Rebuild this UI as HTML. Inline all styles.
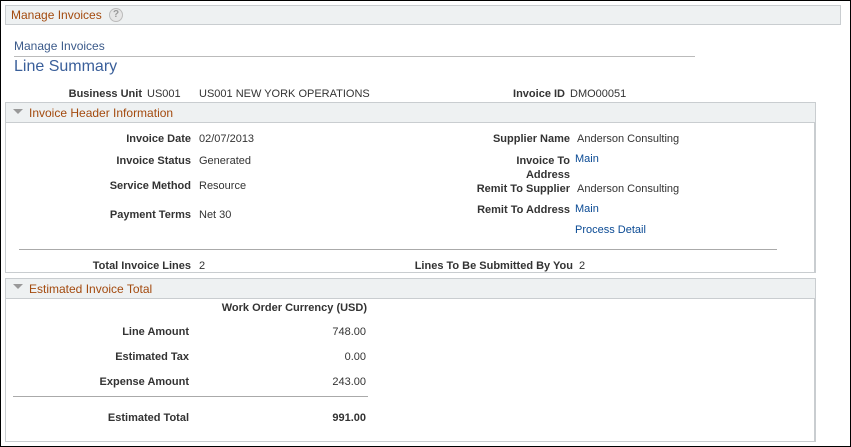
<!DOCTYPE html>
<html><head><style>
*{margin:0;padding:0;box-sizing:border-box}
body{width:851px;height:447px;position:relative;background:#fff;font-family:"Liberation Sans",Arial,sans-serif;font-size:11px;color:#333;overflow:hidden}
#outer{position:absolute;left:0;top:0;width:851px;height:447px;border:1px solid #000}
.a{position:absolute;line-height:14px;white-space:nowrap;margin-top:1px}
.l{font-weight:bold;text-align:right;color:#333}
.lk{color:#0a4a94}
.hdr{position:absolute;background:#eef1f2;border:1px solid #c9cdd0;height:21px}
.box{position:absolute;border:1px solid #c9cdd0;border-right:2px solid #c9cdd0}
.ht{position:absolute;color:#a34a0e;font-size:12px;line-height:14px;margin-top:1px}
.tri{position:absolute;width:0;height:0;border-left:5px solid transparent;border-right:5px solid transparent;border-top:5px solid #999}
.hr{position:absolute;height:1px;background:#aaa}
</style></head><body>
<div id="outer"></div>
<div class="hdr" style="left:5px;top:5px;width:836px;height:20px"></div>
<div class="ht" style="left:11px;top:7px">Manage Invoices</div>
<div style="position:absolute;left:109px;top:8px;width:14px;height:14px;border-radius:50%;border:1px solid #bbb;background:#e6e6e6;color:#999;font-size:10px;font-weight:bold;text-align:center;line-height:12px">?</div>
<div class="a" style="left:14px;top:38px;font-size:12px;color:#3b5a8a">Manage Invoices</div>
<div class="hr" style="left:14px;top:56px;width:681px;background:#bbb"></div>
<div class="a" style="left:14px;top:56px;font-size:16px;line-height:20px;color:#3a5f9a">Line Summary</div>

<div class="a l" style="right:709px;top:86px">Business Unit</div>
<div class="a" style="left:147px;top:86px">US001</div>
<div class="a" style="left:199px;top:86px">US001 NEW YORK OPERATIONS</div>
<div class="a l" style="right:286px;top:86px">Invoice ID</div>
<div class="a" style="left:570px;top:86px">DMO00051</div>

<div class="box" style="left:5px;top:102px;width:811px;height:171px"></div>
<div class="hdr" style="left:5px;top:102px;width:811px"></div>
<div class="tri" style="left:13px;top:109px"></div>
<div class="ht" style="left:29px;top:105px">Invoice Header Information</div>

<div class="a l" style="right:660px;top:131px">Invoice Date</div><div class="a" style="left:199px;top:131px">02/07/2013</div>
<div class="a l" style="right:660px;top:153px">Invoice Status</div><div class="a" style="left:199px;top:153px">Generated</div>
<div class="a l" style="right:660px;top:178px">Service Method</div><div class="a" style="left:199px;top:178px">Resource</div>
<div class="a l" style="right:660px;top:207px">Payment Terms</div><div class="a" style="left:199px;top:207px">Net 30</div>

<div class="a l" style="right:281px;top:131px">Supplier Name</div><div class="a" style="left:577px;top:131px">Anderson Consulting</div>
<div class="a l" style="right:281px;top:153px">Invoice To<br>Address</div><div class="a lk" style="left:575px;top:151px">Main</div>
<div class="a l" style="right:281px;top:181px">Remit To Supplier</div><div class="a" style="left:577px;top:181px">Anderson Consulting</div>
<div class="a l" style="right:281px;top:202px">Remit To Address</div><div class="a lk" style="left:575px;top:201px">Main</div>
<div class="a lk" style="left:575px;top:222px">Process Detail</div>
<div class="hr" style="left:19px;top:249px;width:758px"></div>
<div class="a l" style="right:660px;top:258px">Total Invoice Lines</div><div class="a" style="left:199px;top:258px">2</div>
<div class="a l" style="right:278px;top:258px">Lines To Be Submitted By You</div><div class="a" style="left:579px;top:258px">2</div>

<div class="box" style="left:5px;top:278px;width:811px;height:164px"></div>
<div class="hdr" style="left:5px;top:278px;width:811px"></div>
<div class="tri" style="left:13px;top:284px"></div>
<div class="ht" style="left:29px;top:281px">Estimated Invoice Total</div>

<div class="a l" style="right:484px;top:300px">Work Order Currency (USD)</div>
<div class="a l" style="right:662px;top:324px">Line Amount</div><div class="a" style="right:485px;top:324px">748.00</div>
<div class="a l" style="right:662px;top:349px">Estimated Tax</div><div class="a" style="right:485px;top:349px">0.00</div>
<div class="a l" style="right:662px;top:374px">Expense Amount</div><div class="a" style="right:485px;top:374px">243.00</div>
<div class="hr" style="left:13px;top:396px;width:355px"></div>
<div class="a l" style="right:662px;top:410px">Estimated Total</div><div class="a l" style="right:485px;top:410px">991.00</div>
</body></html>
